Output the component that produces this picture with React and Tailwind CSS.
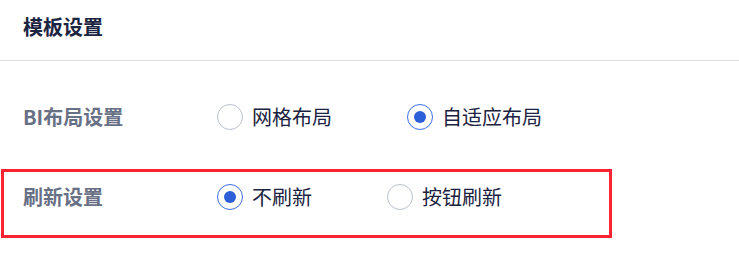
import React from "react";

const font = { fontFamily: '"Noto Sans CJK SC", "Noto Sans", sans-serif' };

function Radio({ label, checked }) {
  return (
    <label className="flex items-center gap-[9px] cursor-pointer">
      {checked ? (
        <span className="w-[26px] h-[26px] rounded-full border border-[#3c6fe2] flex items-center justify-center">
          <span className="w-[12px] h-[12px] rounded-full bg-[#2d5fd8]"></span>
        </span>
      ) : (
        <span className="w-[26px] h-[26px] rounded-full border border-[#b9c0cc] bg-white"></span>
      )}
      <span className="text-[20px] leading-none text-[#1c2340]">{label}</span>
    </label>
  );
}

function Row({ title, options }) {
  return (
    <div className="flex items-center h-[40px]">
      <div className="w-[194px] text-[20px] font-bold leading-none text-[#687085]">{title}</div>
      <div className="flex items-center gap-[75px]">
        {options.map((o) => (
          <Radio key={o.label} label={o.label} checked={o.checked} />
        ))}
      </div>
    </div>
  );
}

export default function App() {
  return (
    <div className="w-[739px] h-[253px] bg-white overflow-hidden" style={font}>
      {/* Header */}
      <div className="h-[61px] border-b border-[#dcdee6] flex items-center pl-[23px] pb-[6px]">
        <h2 className="text-[20px] font-bold leading-none text-[#1b2440]">模板设置</h2>
      </div>

      <div className="pt-[36px] pl-[23px]">
        <Row
          title="BI布局设置"
          options={[
            { label: "网格布局", checked: false },
            { label: "自适应布局", checked: true },
          ]}
        />
      </div>

      <div className="mt-[32px] ml-[1px] w-[611px] h-[69px] border-[3px] border-[#fb2332] pl-[19px] pt-[5px]">
        <Row
          title="刷新设置"
          options={[
            { label: "不刷新", checked: true },
            { label: "按钮刷新", checked: false },
          ]}
        />
      </div>
    </div>
  );
}
